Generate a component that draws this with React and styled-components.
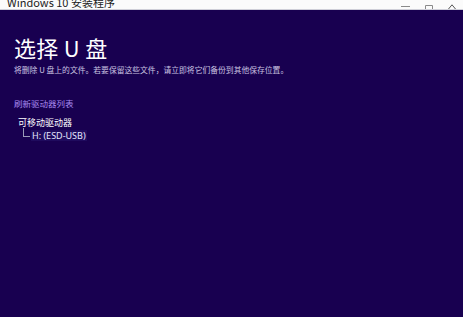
import React from "react";
import styled, { createGlobalStyle } from "styled-components";

const Global = createGlobalStyle`
  html, body { margin: 0; padding: 0; width: 463px; height: 317px; overflow: hidden; background: #180050; }
  #root { width: 463px; height: 317px; }
`;

const Window = styled.div`
  width: 463px;
  height: 317px;
  display: flex;
  flex-direction: column;
  background: #180050;
  font-family: "Noto Sans CJK SC", "Noto Sans", sans-serif;
`;

const TitleBar = styled.div`
  height: 9px;
  flex: none;
  background: #fbfbfb;
  border-bottom: 1px solid #cfcfd8;
  display: flex;
  align-items: flex-end;
  justify-content: space-between;
  overflow: hidden;
  padding-left: 7px;
`;

const TitleText = styled.span`
  font-size: 11px;
  line-height: 11px;
  color: #222;
  margin-bottom: 1px;
  white-space: nowrap;
`;

const Controls = styled.div`
  display: flex;
  align-items: flex-end;
  height: 100%;
`;

const Ctrl = styled.div`
  width: 23px;
  height: 9px;
  display: flex;
  align-items: flex-end;
  justify-content: center;
  color: #777;
`;

const Content = styled.div`
  flex: 1;
  display: flex;
  flex-direction: column;
  padding: 22px 0 0 14px;
`;

const Heading = styled.h1`
  margin: 0;
  font-size: 22px;
  line-height: 30px;
  font-weight: 400;
  color: #ffffff;
  letter-spacing: 0.3px;
`;

const Sub = styled.p`
  margin: 2px 0 0;
  font-size: 7.8px;
  line-height: 12px;
  color: #c9c2e0;
`;

const Refresh = styled.a`
  margin-top: 21px;
  font-size: 8.5px;
  line-height: 12px;
  color: #a88af0;
  cursor: pointer;
`;

const Tree = styled.div`
  margin: 8px 0 0 4px;
  display: flex;
  flex-direction: column;
`;

const Group = styled.div`
  font-size: 9px;
  line-height: 11px;
  color: #ffffff;
`;

const Leaf = styled.div`
  display: flex;
  align-items: flex-end;
  margin-left: 5px;
`;

const Branch = styled.span`
  width: 6px;
  height: 8px;
  border-left: 1px solid #9a9ab8;
  border-bottom: 1px solid #9a9ab8;
  margin-bottom: 4px;
`;

const Drive = styled.span`
  margin-left: 1px;
  padding: 0 1px;
  font-size: 9px;
  line-height: 11px;
  color: #e6e8ff;
  background: #1f0b5e;
  font-family: "Noto Sans", "Noto Sans CJK SC", sans-serif;
`;

export default function App() {
  return (
    <>
      <Global />
      <Window>
        <TitleBar>
          <TitleText>Windows 10 安装程序</TitleText>
          <Controls>
            <Ctrl>
              <svg width="9" height="4" viewBox="0 0 9 4"><path d="M0 1.5h9" stroke="#8a8a8a" strokeWidth="1" /></svg>
            </Ctrl>
            <Ctrl>
              <svg width="8" height="4" viewBox="0 0 8 4"><path d="M0.5 4V0.5h7V4" fill="none" stroke="#8a8a8a" strokeWidth="1" /></svg>
            </Ctrl>
            <Ctrl>
              <svg width="8" height="5" viewBox="0 0 8 5"><path d="M0.5 5L4 0.8L7.5 5" fill="none" stroke="#555" strokeWidth="1" /></svg>
            </Ctrl>
          </Controls>
        </TitleBar>
        <Content>
          <Heading>选择 U 盘</Heading>
          <Sub>将删除 U 盘上的文件。若要保留这些文件，请立即将它们备份到其他保存位置。</Sub>
          <Refresh>刷新驱动器列表</Refresh>
          <Tree>
            <Group>可移动驱动器</Group>
            <Leaf>
              <Branch />
              <Drive>H: (ESD-USB)</Drive>
            </Leaf>
          </Tree>
        </Content>
      </Window>
    </>
  );
}
